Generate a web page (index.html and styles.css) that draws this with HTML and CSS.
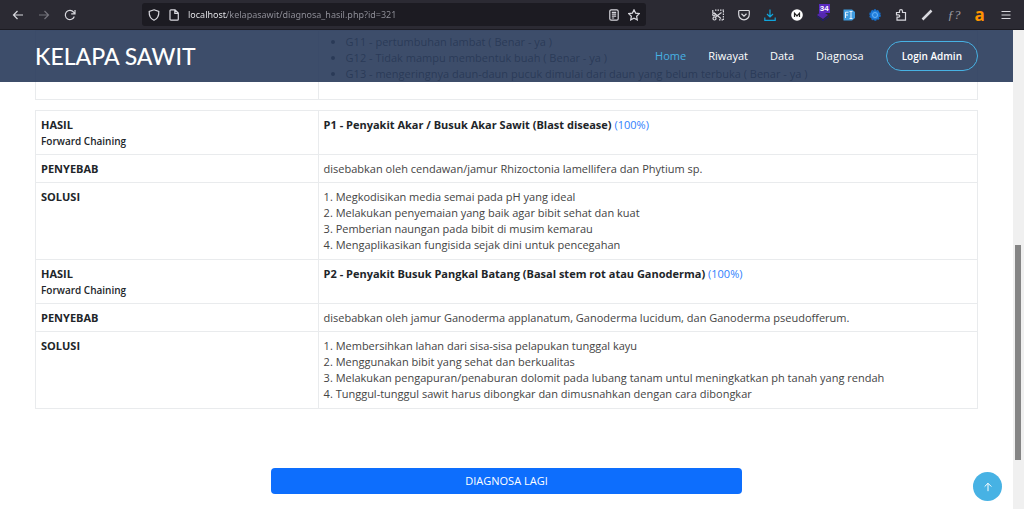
FILE: index.html
```html
<!DOCTYPE html>
<html lang="id">
<head>
  <meta charset="UTF-8">
  <meta name="viewport" content="width=device-width, initial-scale=1">
  <title>Kelapa Sawit</title>
  <link rel="stylesheet" href="styles.css">
</head>
<body>

<!-- Toolbar browser -->
<div class="toolbar">
  <div class="nav-buttons">
    <button type="button" aria-label="Back"><svg viewBox="0 0 12 12"><path d="M11 6H1.5M5.5 2 1.5 6l4 4"/></svg></button>
    <button type="button" class="disabled" aria-label="Forward"><svg viewBox="0 0 12 12"><path d="M1 6h9.5M6.500 2l4 4-4 4"/></svg></button>
    <button type="button" aria-label="Reload"><svg viewBox="0 0 12 12"><path d="M10.300 7.500A4.600 4.600 0 1 1 9.600 3.200L10.800 4.600M11 1v3.800H7.200"/></svg></button>
  </div>
  <div class="urlbar">
    <svg viewBox="0 0 12 12"><path d="M6 .8 10.800 2.500C11 6.500 9.500 9.800 6 11.300 2.500 9.800 1 6.500 1.200 2.500z"/></svg>
    <svg viewBox="0 0 12 12"><path d="M2 1.800Q2 .8 3 .8h4l3.300 3.300v6.100q0 1-1 1H3q-1 0-1-1zM6.800 1v3.400h3.400"/></svg>
    <input class="url" type="text" aria-label="Address" value="localhost/kelapasawit/diagnosa_hasil.php?id=321">
    <button type="button" aria-label="Reader view"><svg viewBox="0 0 12 12"><rect x="1.800" y=".8" width="8.400" height="10.400" rx="1.500"/><path d="M3.800 3.300h4.400M3.800 5.200h4.400M3.800 7.100h4.400M3.800 9h2.400"/></svg></button>
    <button type="button" aria-label="Bookmark"><svg viewBox="0 0 12 12"><path d="m6 .8 1.600 3.300 3.700.5-2.700 2.600.7 3.700L6 9.200l-3.300 1.700.7-3.700L.7 4.600l3.700-.5z"/></svg></button>
  </div>
  <div class="extensions">
    <button type="button" aria-label="Screenshot"><svg viewBox="0 0 12 12"><path d="M3 1.200h9M11.400 2v9M7 10.800h5" stroke-dasharray="1.500 1"/><path d="M.8 1v3M2 4l7 5.500M9.500 3.500 3.500 8"/><circle cx="2" cy="5.500" r="1.300"/><circle cx="2.500" cy="9.500" r="1.500"/></svg></button>
    <button type="button" aria-label="Pocket"><svg viewBox="0 0 12 12"><path d="M1.500 1.500h9q.8 0 .8.8V5.500a5.300 5.300 0 0 1-10.600 0V2.300q0-.8.8-.8zM3.500 4.800 6 7.200l2.500-2.400"/></svg></button>
    <button type="button" class="download" aria-label="Downloads"><svg viewBox="0 0 12 12"><path d="M6 .5v7M3 5l3 3 3-3M.8 8.500v2.800h10.400V8.500"/></svg></button>
    <button type="button" aria-label="M"><svg viewBox="0 0 12 12"><circle class="white" cx="6" cy="6" r="5.800"/><path class="dark" d="M3.500 8V4.200L6 7l2.500-2.800V8"/></svg></button>
    <button type="button" class="has-badge" aria-label="Layers"><svg viewBox="0 0 12 12"><path class="violet" d="m5 2 6 4-5 4-6-4z"/><path class="navy" d="m0 7 6 4 6-4v1l-6 4-6-4z"/></svg><span class="badge">34</span></button>
    <button type="button" aria-label="FI"><svg viewBox="0 0 12 12"><path class="sky" d="M.5.500h8.500L12 3v6l-3 2.500H.5z"/><path class="light" d="M2.500 9V3.200H5.500M2.500 6H5M6.500 2.500h3M8 2.500v7M6.500 9.500h3"/></svg></button>
    <button type="button" aria-label="Gear"><svg viewBox="0 0 12 12"><circle class="gear" cx="6" cy="6" r="4.800" stroke-dasharray="2 1"/><circle class="ring" cx="6" cy="6" r="2.500"/></svg></button>
    <button type="button" aria-label="Extensions"><svg viewBox="0 0 12 12"><path d="M2 11.200V8.200h1.500a1.200 1.200 0 0 0 0-2.400H1.500V3.500h3V2.200a1.500 1.500 0 0 1 3 0v1.300h3v7.700z"/></svg></button>
    <button type="button" aria-label="Pencil"><svg viewBox="0 0 12 12"><path class="thick" d="M1.500 10.500 10.500 1.500"/></svg></button>
    <button type="button" class="formula" aria-label="Fonts"><i>ƒ?</i></button>
    <button type="button" class="amazon" aria-label="a">a</button>
    <button type="button" aria-label="Menu"><svg viewBox="0 0 12 12"><path d="M1.500 2.500h9M1.500 6h9M1.500 9.500h9"/></svg></button>
  </div>
</div>

<div class="viewport">
  <div class="page">
    <header class="header">
      <a class="logo" href="#">KELAPA SAWIT</a>
      <nav class="navbar">
        <a class="active" href="#">Home</a>
        <a href="#">Riwayat</a>
        <a href="#">Data</a>
        <a href="#">Diagnosa</a>
        <a class="login" href="#">Login Admin</a>
      </nav>
    </header>

    <main>
      <!-- Gejala yang dipilih -->
      <table class="gejala">
        <tr>
          <th></th>
          <td>
            <ul>
              <li>G11 - pertumbuhan lambat ( Benar - ya )</li>
              <li>G12 - Tidak mampu membentuk buah ( Benar - ya )</li>
              <li>G13 - mengeringnya daun-daun pucuk dimulai dari daun yang belum terbuka ( Benar - ya )</li>
            </ul>
          </td>
        </tr>
      </table>

      <!-- Hasil diagnosa -->
      <table class="hasil">
        <tr>
          <th>HASIL<br><small>Forward Chaining</small></th>
          <td><b>P1 - Penyakit Akar / Busuk Akar Sawit (Blast disease)</b> <span class="persen">(100%)</span></td>
        </tr>
        <tr>
          <th>PENYEBAB</th>
          <td>disebabkan oleh cendawan/jamur Rhizoctonia lamellifera dan Phytium sp.</td>
        </tr>
        <tr>
          <th>SOLUSI</th>
          <td class="solusi">
            1. Megkodisikan media semai pada pH yang ideal<br>
            2. Melakukan penyemaian yang baik agar bibit sehat dan kuat<br>
            3. Pemberian naungan pada bibit di musim kemarau<br>
            4. Mengaplikasikan fungisida sejak dini untuk pencegahan
          </td>
        </tr>
        <tr>
          <th>HASIL<br><small>Forward Chaining</small></th>
          <td><b>P2 - Penyakit Busuk Pangkal Batang (Basal stem rot atau Ganoderma)</b> <span class="persen">(100%)</span></td>
        </tr>
        <tr>
          <th>PENYEBAB</th>
          <td>disebabkan oleh jamur Ganoderma applanatum, Ganoderma lucidum, dan Ganoderma pseudofferum.</td>
        </tr>
        <tr>
          <th>SOLUSI</th>
          <td class="solusi">
            1. Membersihkan lahan dari sisa-sisa pelapukan tunggal kayu<br>
            2. Menggunakan bibit yang sehat dan berkualitas<br>
            3. Melakukan pengapuran/penaburan dolomit pada lubang tanam untul meningkatkan ph tanah yang rendah<br>
            4. Tunggul-tunggul sawit harus dibongkar dan dimusnahkan dengan cara dibongkar
          </td>
        </tr>
      </table>

      <a class="btn" href="#">DIAGNOSA LAGI</a>
    </main>

    <a class="back-to-top" href="#" aria-label="Back to top"><svg viewBox="0 0 12 12"><path d="M6 11V1.500M2 5.500l4-4 4 4"/></svg></a>
  </div>

  <div class="scrollbar"><div class="thumb"></div></div>
</div>

</body>
</html>
```

FILE: styles.css
```css
* {
  box-sizing: border-box;
}

body {
  margin: 0;
  height: 100vh;
  display: flex;
  flex-direction: column;
  overflow: hidden;
  font-family: "Open Sans", sans-serif;
  font-size: 11px;
  line-height: 16px;
  color: #444;
  background: #fff;
}

a {
  text-decoration: none;
}

svg {
  display: block;
  width: 12px;
  height: 12px;
  fill: none;
  stroke: currentColor;
  stroke-width: 1.2;
}

/* Toolbar browser */
.toolbar {
  flex: none;
  display: flex;
  align-items: center;
  height: 30px;
  padding-right: 12px;
  background: #2b2a33;
  border-bottom: 1px solid #1c1b22;
  color: #d8d8de;
}

.toolbar button {
  padding: 0;
  border: 0;
  background: none;
  color: inherit;
}

.nav-buttons {
  flex: none;
  display: flex;
  gap: 14px;
  width: 142px;
  padding-left: 12px;
}

.toolbar .disabled {
  color: #75747c;
}

.urlbar {
  flex: 0 1 504px;
  display: flex;
  align-items: center;
  gap: 8px;
  height: 23px;
  padding: 0 6px;
  background: #1c1b22;
  border-radius: 3px;
}

.url {
  flex: 1;
  min-width: 0;
  padding: 0;
  border: 0;
  font: 9px "Noto Sans", sans-serif;
  color: transparent;
  background: linear-gradient(90deg, #f0f0f4 39px, #92929b 39px);
  background-clip: text;
  -webkit-background-clip: text;
}

.extensions {
  flex: none;
  display: flex;
  align-items: center;
  justify-content: space-between;
  width: 300px;
  margin-left: auto;
}

.extensions button {
  width: 12px;
}

.toolbar .download {
  color: #10a5dc;
}

.has-badge {
  position: relative;
}

.badge {
  position: absolute;
  top: -5px;
  left: 2px;
  padding: 0 1px;
  font-size: 8px;
  font-weight: 700;
  line-height: 9px;
  color: #fff;
  background: #5b2bc0;
}

.white { fill: #fff; stroke: none; }
.dark { stroke: #222; }
.violet { fill: #5327b0; stroke: none; }
.navy { fill: #1c1c7a; stroke: none; }
.sky { fill: #3f9be0; stroke: none; }
.light { stroke: #e4f2ff; stroke-width: 1; }
.gear { fill: #2480dd; stroke: #1670cf; stroke-width: 2; }
.ring { stroke: #64b0f5; stroke-width: 1; }
.thick { stroke-width: 2.5; }

.toolbar .formula {
  font: 13px/12px "Liberation Serif", serif;
  color: #9c9ba3;
}

.toolbar .amazon {
  font: 700 17px/12px "Open Sans", sans-serif;
  color: #ff9400;
}

/* Halaman */
.viewport {
  flex: 1;
  display: flex;
  min-height: 0;
}

.page {
  position: relative;
  flex: 1;
  overflow: hidden;
}

.header {
  position: absolute;
  top: 0;
  left: 0;
  right: 0;
  display: flex;
  align-items: center;
  justify-content: space-between;
  height: 52px;
  padding: 0 35px;
  background: rgba(40, 58, 90, 0.9);
}

.logo {
  font-family: Lato, sans-serif;
  font-size: 23px;
  font-weight: 500;
  line-height: 28px;
  color: #fff;
}

.navbar {
  display: flex;
  align-items: center;
  gap: 22px;
  font-weight: 500;
}

.navbar a {
  color: #fff;
}

.navbar .active {
  color: #47b2e4;
}

.navbar .login {
  padding: 6px 15px;
  border: 1px solid #47b2e4;
  border-radius: 15px;
  font-size: 10px;
  font-weight: 600;
}

main {
  padding: 0 35px;
}

table {
  width: 100%;
  table-layout: fixed;
  border-collapse: collapse;
}

th,
td {
  padding: 6px 5px 5px;
  border: 1px solid #e9ebed;
  text-align: left;
  vertical-align: top;
}

th {
  width: 30%;
  font-weight: 700;
  color: #212529;
}

b {
  color: #212529;
}

small {
  font-size: 10px;
  font-weight: 600;
}

.gejala {
  margin-bottom: 10px;
}

.gejala td {
  padding-top: 3px;
}

.gejala ul {
  margin: 0 0 12px;
  padding-left: 22px;
}

.hasil .solusi {
  padding-bottom: 6px;
}

.persen {
  color: #2f80fd;
}

.btn {
  display: block;
  width: 50%;
  margin: 59px auto 0;
  padding: 5px;
  border-radius: 4px;
  text-align: center;
  color: #fff;
  background: #0d6efd;
}

.back-to-top {
  position: absolute;
  right: 11px;
  bottom: 8px;
  display: flex;
  align-items: center;
  justify-content: center;
  width: 29px;
  height: 29px;
  border-radius: 50%;
  color: #fff;
  background: #47b2e4;
}

.back-to-top svg {
  width: 10px;
  height: 10px;
}

/* Scrollbar halaman */
.scrollbar {
  flex: none;
  display: flex;
  flex-direction: column;
  width: 11px;
  padding: 215px 3px 49px 2px;
  background: #f0f0f0;
}

.thumb {
  flex: 1;
  background: #858585;
}
```
